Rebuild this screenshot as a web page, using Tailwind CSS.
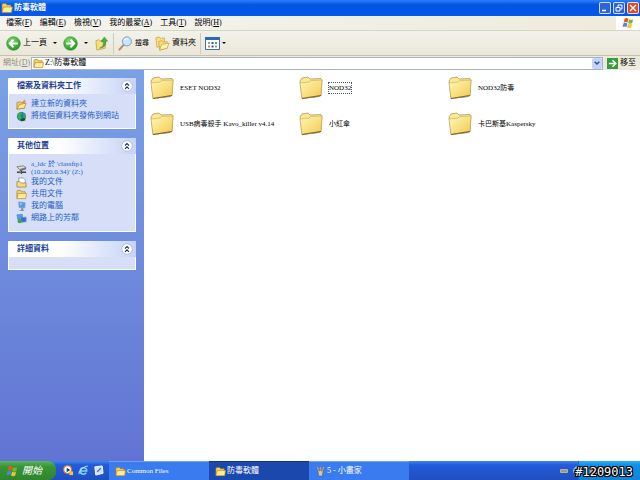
<!DOCTYPE html>
<html lang="zh-Hant">
<head>
    <meta charset="utf-8">
    <meta name="viewport" content="width=device-width, initial-scale=1">
    <title>防毒軟體</title>
    <script src="https://cdn.jsdelivr.net/npm/@tailwindcss/browser@4"></script>
</head>
<body class="flex h-screen flex-col overflow-hidden bg-white font-['Liberation_Serif','Noto_Sans_CJK_TC',serif] text-[8px] leading-3 text-black">

<!-- shared icons, kept rendered so the gradients resolve -->
<svg class="absolute size-0" xmlns="http://www.w3.org/2000/svg" aria-hidden="true">
    <defs>
        <linearGradient id="paper" x1="0" y1="0" x2="1" y2="1">
            <stop offset="0" stop-color="#fff8b8" />
            <stop offset="1" stop-color="#f3c94e" />
        </linearGradient>
        <radialGradient id="green" cx=".4" cy=".3" r=".8">
            <stop offset="0" stop-color="#7fdc6c" />
            <stop offset="1" stop-color="#1d8a1d" />
        </radialGradient>
    </defs>
    <symbol id="folder-big" viewBox="0 0 24 24">
        <path d="M2 23 21 20 23 18 20 21Z" fill="#777" />
        <path d="M1 5 3 2 9 1 11 3 22 2.500 23 4 22 19.500 3 22.500Z" fill="#fbe893" stroke="#a98d45" stroke-width=".7" />
        <path d="M1 7 10 6 12 4.500 23 4 22 19.500 3 22.500Z" fill="url(#paper)" stroke="#b89a4c" stroke-width=".5" />
        <path d="M3 22.500 22 19.500" stroke="#7d6427" stroke-width="1.200" />
    </symbol>
    <symbol id="folder" viewBox="0 0 12 12">
        <path d="M1 10V2.500L2 1.500H5L6 3H10V10Z" fill="#f5d05c" stroke="#a67c1c" stroke-width=".7" />
        <path d="M1 10.500 2.500 5H11.500L10.500 10.500Z" fill="#ffec9a" stroke="#b48a25" stroke-width=".7" />
    </symbol>
    <symbol id="chevrons" viewBox="0 0 12 12">
        <circle cx="6" cy="6" r="5.300" fill="#fff" stroke="#a9b8dc" stroke-width=".8" />
        <path d="M4 5.500 6 3.500 8 5.500M4 8.800 6 6.800 8 8.800" fill="none" stroke="#1c2f66" stroke-width="1.100" />
    </symbol>
    <symbol id="flag" viewBox="0 0 14 14">
        <path d="M3 2Q5 .5 7.500 2L6.500 6.500Q4.500 5 2 6.500Z" fill="#e8562a" />
        <path d="M8.200 2.500Q10.500 4 13 2.500L12 7Q9.500 8.500 7.200 7Z" fill="#78b82c" />
        <path d="M1.800 7.300Q4 6 6.300 7.300L5.300 11.800Q3 10.500 .6 11.800Z" fill="#4a87e8" />
        <path d="M7 7.800Q9.500 9.200 11.800 7.800L10.700 12.300Q8.300 13.700 6 12.300Z" fill="#f6c432" />
    </symbol>
    <symbol id="globe" viewBox="0 0 12 12">
        <circle cx="6" cy="6" r="5" fill="#2275bb" />
        <path d="M2 3 5 1 7 3 5 5 6 8 4 10 1.500 7ZM8 2 11 5 10 9 8 7Z" fill="#36b33c" />
        <path d="M5 9 9 7.500 10.500 10 6 11.500Z" fill="#16502e" />
    </symbol>
    <symbol id="computer" viewBox="0 0 12 12">
        <path d="M3 1 10 2 9.500 7.500 3.500 7Z" fill="#4f9df2" stroke="#7f93b5" stroke-width=".8" />
        <path d="M4.500 2.500 7 2.800 4.500 5Z" fill="#b9e0ff" />
        <path d="M5.500 7.500H8V9.500L9.500 11H3L5.500 9.500Z" fill="#8896b0" />
    </symbol>
</svg>

<!-- title bar -->
<header class="flex h-4 shrink-0 items-center bg-linear-to-b from-[#2a80f5] via-[#0453e4] via-30% to-[#0558ee] px-px text-white">
    <svg class="size-3"><use href="#folder" /></svg>
    <h1 class="ml-px flex-1 font-bold">防毒軟體</h1>
    <div class="flex gap-0.5">
        <button aria-label="最小化" class="size-3 rounded-xs border border-white/80 bg-[#2c62dc]">
            <svg viewBox="0 0 10 10"><path d="M2 7.500H6" stroke="#fff" stroke-width="1.600" /></svg>
        </button>
        <button aria-label="還原" class="size-3 rounded-xs border border-white/80 bg-[#2c62dc]">
            <svg viewBox="0 0 10 10" fill="none" stroke="#fff"><path d="M4 4V2H8V6H6.500M2 4.500H6V8H2Z" /></svg>
        </button>
        <button aria-label="關閉" class="size-3 rounded-xs border border-white/80 bg-[#dc4a26]">
            <svg viewBox="0 0 10 10" stroke="#fff" stroke-width="1.400"><path d="M2 2 8 8M8 2 2 8" /></svg>
        </button>
    </div>
</header>

<!-- menu -->
<nav class="flex h-[15px] shrink-0 items-center gap-2 border-b border-[#d8d4c4] bg-linear-to-r from-[#f4f4f1] to-[#eeebdc] pl-1.5">
    <button>檔案(<u>F</u>)</button>
    <button>編輯(<u>E</u>)</button>
    <button>檢視(<u>V</u>)</button>
    <button>我的最愛(<u>A</u>)</button>
    <button>工具(<u>T</u>)</button>
    <button>說明(<u>H</u>)</button>
    <div class="ml-auto flex h-full w-6 items-center justify-center bg-white">
        <svg class="size-3"><use href="#flag" /></svg>
    </div>
</nav>

<!-- toolbar -->
<div class="flex h-[25px] shrink-0 items-center border-b border-[#c5c2b4] bg-linear-to-b from-[#f3f2ea] to-[#eae7d8] pl-1.5">
    <button class="flex items-center gap-0.5">
        <svg class="size-[15px]" viewBox="0 0 16 16"><circle cx="8" cy="8" r="7.300" fill="url(#green)" stroke="#2d8b2d" stroke-width=".6" /><path d="M12.500 8H4.500M8 4 4 8 8 12" fill="none" stroke="#fff" stroke-width="2" /></svg>
        上一頁
    </button>
    <button aria-label="上一頁清單" class="w-4 pl-1.5"><svg class="h-1 w-1" viewBox="0 0 4 4"><path d="M0 1H4L2 3Z" /></svg></button>
    <button aria-label="下一頁"><svg class="size-[15px]" viewBox="0 0 16 16"><circle cx="8" cy="8" r="7.300" fill="url(#green)" stroke="#2d8b2d" stroke-width=".6" /><path d="M3.500 8H11.500M8 4 12 8 8 12" fill="none" stroke="#fff" stroke-width="2" /></svg></button>
    <button aria-label="下一頁清單" class="w-4 pl-1.5"><svg class="h-1 w-1" viewBox="0 0 4 4"><path d="M0 1H4L2 3Z" /></svg></button>
    <button aria-label="向上">
        <svg class="size-[15px]" viewBox="0 0 16 16">
            <path d="M2 5 5 4 7 5 12 4V13L3 15Z" fill="#f8df7c" stroke="#b89434" stroke-width=".7" />
            <path d="M6 13Q11 11 10 6H7.500L11 1 14.500 5.500H12.500Q13.500 12 6 13Z" fill="#47b53a" stroke="#2b7b25" stroke-width=".5" />
        </svg>
    </button>
    <div class="mx-1 h-[21px] w-px bg-[#cfcbb9]"></div>
    <button class="flex items-center gap-0.5">
        <svg class="size-[15px]" viewBox="0 0 16 16">
            <path d="M1.500 14.500 6 9.500" stroke="#b98a6a" stroke-width="2.200" stroke-linecap="round" />
            <circle cx="9.500" cy="5.800" r="4.800" fill="#c8e6fb" stroke="#7295c4" />
            <path d="M7 4Q9 2 11 3" fill="none" stroke="#fff" stroke-width="1.200" />
        </svg>
        <span class="text-[7px]">搜尋</span>
    </button>
    <button class="ml-1.5 flex items-center gap-0.5">
        <svg class="size-[15px]" viewBox="0 0 16 16" fill="#f9df80" stroke="#c09b3c" stroke-width=".7">
            <path d="M1 2 4 1 6 2.500 10 2V10L2 12Z" />
            <path d="M4 6 7 5 9 6.500 13 6V13L5 15Z" />
            <path d="M5 15 7 9 15 7.500 13 13Z" fill="#fff0a8" />
        </svg>
        資料夾
    </button>
    <div class="mx-1 h-[21px] w-px bg-[#cfcbb9]"></div>
    <button aria-label="檢視模式" class="flex items-center gap-0.5">
        <svg class="h-[13px] w-[15px]" viewBox="0 0 15 13">
            <path d="M.5 .5H14.500V12.500H.5Z" fill="#fff" stroke="#3f6fb0" /><path d="M0 0H15V3H0Z" fill="#2f68b5" />
            <path d="M3 5H5V7H3ZM10 8.500H12V10.500H10Z" fill="#9a9a9a" /><path d="M6.500 5H8.500V7H6.500ZM6.500 8.500H8.500V10.500H6.500Z" fill="#285ca8" />
            <path d="M10 5H12V7H10Z" fill="#57a35a" /><path d="M3 8.500H5V10.500H3Z" fill="#d77b6b" />
        </svg>
        <svg class="h-1 w-1" viewBox="0 0 4 4"><path d="M0 1H4L2 3Z" /></svg>
    </button>
</div>

<!-- address -->
<form class="flex h-3.5 shrink-0 items-center bg-[#edeadc]">
    <label for="address" class="w-[31px] pl-[3px] whitespace-nowrap text-[#8c8a80]">網址(<u>D</u>)</label>
    <div class="flex h-[13px] flex-1 items-center border border-[#a5b3c4] bg-white pl-px">
        <svg class="size-[11px]"><use href="#folder" /></svg>
        <input id="address" value="Z:\防毒軟體" class="ml-px h-3 min-w-0 flex-1 outline-none">
        <button type="button" aria-label="顯示清單" class="flex h-[11px] w-2.5 items-center justify-center rounded-xs bg-[#c3d3fb]">
            <svg class="size-1.5" viewBox="0 0 6 6"><path d="M.7 1.700 3 4 5.300 1.700" fill="none" stroke="#33507e" stroke-width="1.400" /></svg>
        </button>
    </div>
    <button class="flex items-center gap-0.5 px-1">
        <svg class="size-[11px]" viewBox="0 0 12 12"><path d="M0 0H12V12H0Z" fill="#2f9e3c" /><path d="M2 6H9M6 2.500 9.500 6 6 9.500" fill="none" stroke="#fff" stroke-width="1.700" /></svg>
        移至
    </button>
</form>

<div class="flex min-h-0 flex-1">
    <aside class="flex w-36 shrink-0 flex-col gap-[9px] bg-linear-to-b from-[#7aa1e6] to-[#6274d3] p-2 text-[#215dc6]">
        <section class="bg-[#d6dff7]">
            <div class="flex h-4 items-center justify-between rounded-t-xs bg-linear-to-r from-white from-40% to-[#c6d3f7] pr-[3px] pl-[9px]">
                <h2 class="font-bold text-[#1c3f94]">檔案及資料夾工作</h2>
                <button aria-label="收合檔案及資料夾工作" class="size-3"><svg class="size-3"><use href="#chevrons" /></svg></button>
            </div>
            <ul class="border border-t-0 border-white px-[7px] pt-1 pb-1.5">
                <li><a href="#" class="flex h-3 items-center gap-1">
                    <svg class="size-[11px]" viewBox="0 0 12 12"><path d="M1 11V4L4 3 6 4 9 3.500V10Z" fill="#f3cb56" stroke="#a87b20" stroke-width=".7" /><path d="M1 11 4 6 11 4.500 9 10Z" fill="#ffeb96" stroke="#a87b20" stroke-width=".7" /><path d="M9 0 9.700 2 11.500 2.500 9.700 3.200 9 5 8.300 3.200 6.500 2.500 8.300 2Z" fill="#f08c3c" /></svg>
                    建立新的資料夾</a></li>
                <li><a href="#" class="flex h-3 items-center gap-1 whitespace-nowrap"><svg class="size-[11px]"><use href="#globe" /></svg>將這個資料夾發佈到網站</a></li>
            </ul>
        </section>

        <section class="bg-[#d6dff7]">
            <div class="flex h-4 items-center justify-between rounded-t-xs bg-linear-to-r from-white from-40% to-[#c6d3f7] pr-[3px] pl-[9px]">
                <h2 class="font-bold text-[#1c3f94]">其他位置</h2>
                <button aria-label="收合其他位置" class="size-3"><svg class="size-3"><use href="#chevrons" /></svg></button>
            </div>
            <ul class="border border-t-0 border-white px-[7px] pt-1.5 pb-[7px]">
                <li><a href="#" class="flex h-4 gap-1 text-[7px] leading-2">
                    <svg class="mt-1 size-[11px] shrink-0" viewBox="0 0 12 12"><path d="M1 3 8 2 11 4 4 6Z" fill="#ddd" stroke="#555" stroke-width=".7" /><path d="M4 6 11 4V6L4 8Z" fill="#777" /><path d="M1 9H11M6 7V11" stroke="#444" stroke-width="1.500" /><path d="M3 10H6" stroke="#d2b541" /></svg>
                    <span>a_ldc 於 'classftp1<br>(10.200.0.34)' (Z:)</span></a></li>
                <li><a href="#" class="flex h-3 items-center gap-1">
                    <svg class="size-[11px]" viewBox="0 0 12 12"><path d="M3 1H8L10 3V9H3Z" fill="#fff" stroke="#718ab0" stroke-width=".8" /><path d="M1 5H4L5 6.500H11V11H1Z" fill="#f4dc7b" stroke="#9e8439" stroke-width=".8" /></svg>
                    我的文件</a></li>
                <li><a href="#" class="flex h-3 items-center gap-1"><svg class="size-[11px]"><use href="#folder" /></svg>共用文件</a></li>
                <li><a href="#" class="flex h-3 items-center gap-1"><svg class="size-[11px]"><use href="#computer" /></svg>我的電腦</a></li>
                <li><a href="#" class="flex h-3 items-center gap-1">
                    <svg class="size-[11px]" viewBox="0 0 12 12"><path d="M1 2 7 1.500V7L2 7.500Z" fill="#4f9df2" stroke="#6f86b0" stroke-width=".8" /><path d="M5 5 11 4.500V9.500L6 10Z" fill="#2e74d0" stroke="#6f86b0" stroke-width=".8" /><circle cx="4" cy="9" r="2.300" fill="#39a650" /></svg>
                    網路上的芳鄰</a></li>
            </ul>
        </section>

        <section class="bg-[#d6dff7]">
            <div class="flex h-4 items-center justify-between rounded-t-xs bg-linear-to-r from-white from-40% to-[#c6d3f7] pr-[3px] pl-[9px]">
                <h2 class="font-bold text-[#1c3f94]">詳細資料</h2>
                <button aria-label="收合詳細資料" class="size-3"><svg class="size-3"><use href="#chevrons" /></svg></button>
            </div>
            <div class="h-[13px] border border-t-0 border-white"></div>
        </section>
    </aside>

    <!-- files -->
    <main class="flex-1 pt-[6px] pl-1.5">
        <ul class="grid grid-cols-[repeat(auto-fill,149px)] text-[7px]">
            <li class="flex h-9 items-start gap-1.5"><svg class="size-6"><use href="#folder-big" /></svg><span class="mt-[7px] leading-[10px]">ESET NOD32</span></li>
            <li class="flex h-9 items-start gap-1.5"><svg class="size-6"><use href="#folder-big" /></svg><span class="mt-[7px] leading-[10px] outline outline-dotted outline-gray-600">NOD32</span></li>
            <li class="flex h-9 items-start gap-1.5"><svg class="size-6"><use href="#folder-big" /></svg><span class="mt-[7px] leading-[10px]">NOD32防毒</span></li>
            <li class="flex h-9 items-start gap-1.5"><svg class="size-6"><use href="#folder-big" /></svg><span class="mt-[7px] leading-[10px]">USB病毒殺手 Kavo_killer v4.14</span></li>
            <li class="flex h-9 items-start gap-1.5"><svg class="size-6"><use href="#folder-big" /></svg><span class="mt-[7px] leading-[10px]">小紅傘</span></li>
            <li class="flex h-9 items-start gap-1.5"><svg class="size-6"><use href="#folder-big" /></svg><span class="mt-[7px] leading-[10px]">卡巴斯基Kaspersky</span></li>
        </ul>
    </main>
</div>

<!-- taskbar -->
<footer class="relative flex h-[19px] shrink-0 items-stretch bg-linear-to-b from-[#4285ef] via-[#245bdb] via-20% to-[#1f4fc0] text-white">
    <button class="flex w-14 items-center gap-1 rounded-r-lg bg-linear-to-b from-[#5cb55c] via-[#379537] via-30% to-[#2f852f] pl-1.5 text-[10px] italic">
        <svg class="size-3"><use href="#flag" /></svg>開始
    </button>
    <div class="flex w-[53px] items-center gap-1 pl-[7px]">
        <button aria-label="媒體播放程式"><svg class="size-[11px]" viewBox="0 0 12 12"><circle cx="5" cy="5" r="4.300" fill="#fff" stroke="#d8752a" stroke-width="1.400" /><path d="M4 3 8 5.500 4 8Z" fill="#203c80" /><path d="M7 7H11V11H7Z" fill="#f2c343" /></svg></button>
        <button aria-label="瀏覽器"><svg class="size-[11px]" viewBox="0 0 12 12" fill="none"><path d="M2.500 6.500H9.500Q9.500 3 6 3T2.500 6.500 6 10Q8 10 9 8.500" stroke="#7fd0ff" stroke-width="1.700" /><path d="M1 10Q0 7 5 3.500T11 2" stroke="#cfeaff" /></svg></button>
        <button aria-label="顯示桌面"><svg class="size-[11px]" viewBox="0 0 12 12"><path d="M2 2 10 1 11 9 3 11Z" fill="#cfe2fa" stroke="#fff" /><path d="M4 7 8 3 9 4 5 8Z" fill="#3a6cb8" /></svg></button>
    </div>
    <div class="flex items-stretch text-[7px]">
        <button class="flex w-[100px] items-center gap-px border-t border-[#6ca3fa] bg-[#3a7cf0] pl-1.5"><svg class="size-[11px]"><use href="#folder" /></svg>Common Files</button>
        <button class="flex w-[100px] items-center gap-px border-t border-[#14378c] bg-[#1b48ac] pl-1.5 text-[8px]"><svg class="size-[11px]"><use href="#folder" /></svg>防毒軟體</button>
        <button class="flex w-[100px] items-center gap-px border-t border-[#6ca3fa] bg-[#3a7cf0] pl-1.5 text-[8px]">
            <svg class="size-[11px]" viewBox="0 0 12 12"><path d="M3 5H9L8 11H4Z" fill="#c9c4bd" stroke="#6a5b50" stroke-width=".7" /><path d="M4 5 2.500 1M6 5V1M8 5 9.500 1" stroke="#d99a4e" stroke-width="1.300" /></svg>
            5 - 小畫家</button>
    </div>
    <div class="ml-auto flex items-center">
        <svg class="mr-2.5 h-1.5 w-2" viewBox="0 0 8 6"><path d="M0 1H8V5H0Z" fill="#dcdcdc" stroke="#555" stroke-width=".6" /><path d="M1 3H7" stroke="#555" /></svg>
    </div>
    <div class="flex w-[62px] items-center border-l border-[#0e6cc8] bg-linear-to-b from-[#2fb0f5] via-[#1291e6] via-20% to-[#1084d8]">
        <svg class="-ml-1.5 size-2.5" viewBox="0 0 10 10"><circle cx="5" cy="5" r="4.500" fill="#4fb0f7" stroke="#a9dcff" stroke-width=".7" /><path d="M6 3 4 5 6 7" fill="none" stroke="#fff" /></svg>
        <svg class="ml-1.5 size-2.5" viewBox="0 0 10 10"><circle cx="5" cy="5" r="4" fill="#e0a184" /></svg>
    </div>
    <!-- stamp -->
    <span class="absolute right-[7px] bottom-0 font-['DejaVu_Sans_Mono',monospace] text-xs [text-shadow:1px_0_#000,-1px_0_#000,0_1px_#000,0_-1px_#000,1px_1px_#000,-1px_-1px_#000,1px_-1px_#000,-1px_1px_#000]">#1209013</span>
</footer>
</body>
</html>
